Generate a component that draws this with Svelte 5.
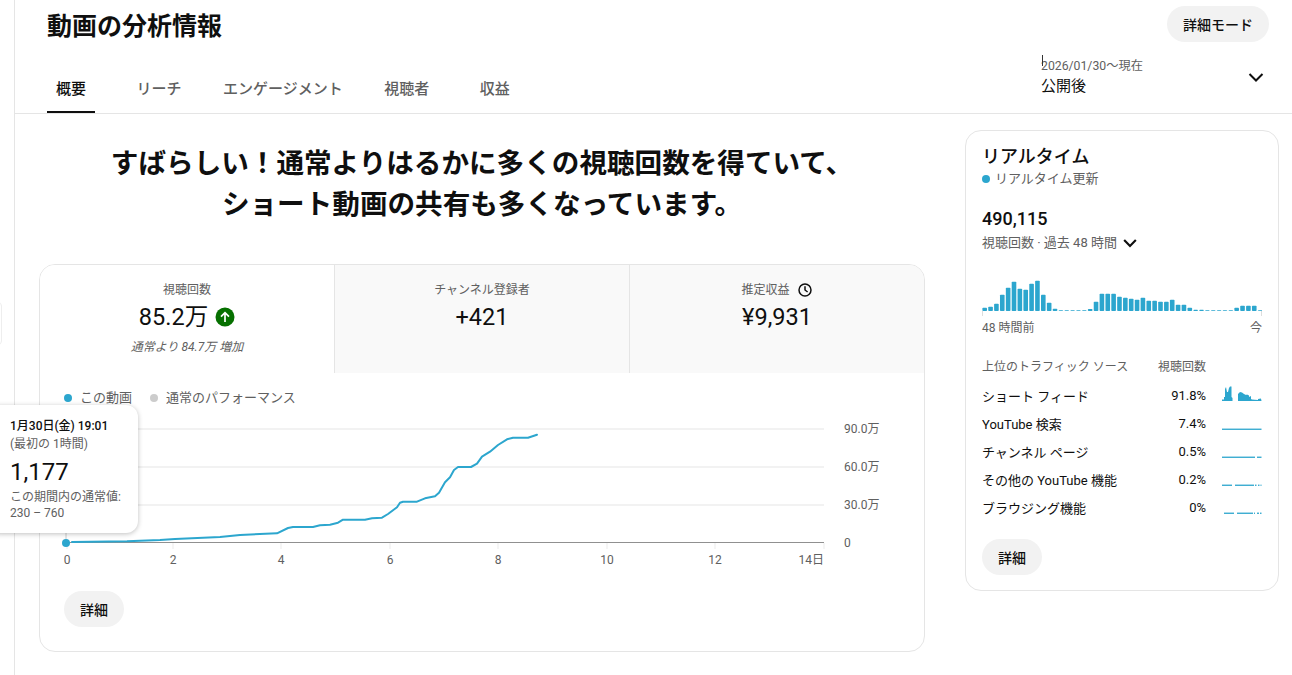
<script>
  const tabs = ['概要', 'リーチ', 'エンゲージメント', '視聴者', '収益'];

  const line = [
    [72,542],[127,541.3],[160,540],[175,539],[220,537],[240,535],[277,533.3],[288,528],[293,527],
    [313,527],[320,525.3],[330,524.7],[338,522.7],[343,519.7],[365,519.7],[372,518.3],[382,517.7],
    [388,514],[397,507.3],[400,502.7],[403,501.7],[417,501.7],[425,498.3],[435,496.3],[439,492.7],
    [445,482.3],[450,477.3],[454,470],[458,467],[471,467],[477,463.7],[482,456.7],[490,451.7],
    [498,445],[507,439.3],[513,437.7],[528,437.7],[537,434.7]
  ].map((p) => p.join(',')).join(' ');

  const grid = [[429, '90.0万'], [467, '60.0万'], [505, '30.0万'], [542.5, '0']];
  const xTicks = [[67, '0'], [173, '2'], [281, '4'], [390, '6'], [498, '8'], [607, '10'], [715, '12'], [824, '14日']];

  // bar heights of the 48 hour chart, in px
  const bars = [3.3,4.3,7.3,16.3,23.3,29.3,22.3,21.3,27.3,30.3,16.3,8.3,2.3,.8,.8,.8,.8,.8,2,9.3,17.3,17.3,17.3,14.3,13.3,12.3,11.3,13.3,10.3,10.3,9.3,9.3,11.3,6.3,6.3,3.3,1.3,1.3,.8,.8,.8,.8,.8,3.3,5.3,5.3,5.3,.8];

  const sources = [
    { name: 'ショート フィード', pct: '91.8%', segs: null },
    { name: 'YouTube 検索', pct: '7.4%', segs: [[0, 39.5]] },
    { name: 'チャンネル ページ', pct: '0.5%', segs: [[0, 33], [35, 39.5]] },
    { name: 'その他の YouTube 機能', pct: '0.2%', segs: [[0, 10], [13, 32], [33, 34.5], [36, 37.5], [38.5, 39.5]] },
    { name: 'ブラウジング機能', pct: '0%', segs: [[2, 12], [15, 31], [32, 33], [35, 37], [38, 39.5]] }
  ];

  const spark = '0,15 0,13.5 2,13.5 2,11 3,11 3,3 4,1 5,6 6,6 7,2 8,.5 9.5,.5 9.5,11 10.5,12 10.5,15 16,15 16,8 18,6 20,6.5 22,8 24,9 25,8.5 27,9.5 27,11 29,10 29,13 30,13.5 36,14 36,13 39,12.5 39.5,15';
</script>

<div class="page">
  <div class="edge"></div>
  <main>
    <header>
      <div class="top">
        <h1>動画の分析情報</h1>
        <button class="pill wide">詳細モード</button>
      </div>
      <div class="nav">
        <div class="tabs">
          {#each tabs as tab, i}
            <div class="tab" class:active={i === 0}>{tab}</div>
          {/each}
        </div>
        <div class="period">
          <span class="caret"></span>
          <div>
            <div class="range">2026/01/30〜現在</div>
            <div class="label">公開後</div>
          </div>
          <svg class="chev" width="24" height="24" viewBox="0 0 24 24"><path d="M5.5 9l6.5 6.5L18.5 9" fill="none" stroke="#0f0f0f" stroke-width="2"/></svg>
        </div>
      </div>
    </header>

    <div class="content">
      <section class="left">
        <h2>すばらしい！通常よりはるかに多くの視聴回数を得ていて、<br />ショート動画の共有も多くなっています。</h2>
        <div class="card stats">
          <div class="cells">
            <div class="cell on">
              <div class="name">視聴回数</div>
              <div class="value">85.2万
                <svg width="20" height="20" viewBox="0 0 20 20"><circle cx="10" cy="10" r="9.5" fill="#067000"/><path d="M10 15V6M6 9.6L10 5.6l4 4" fill="none" stroke="#fff" stroke-width="1.7"/></svg>
              </div>
              <div class="note">通常より 84.7万 増加</div>
            </div>
            <div class="cell">
              <div class="name">チャンネル登録者</div>
              <div class="value">+421</div>
            </div>
            <div class="cell">
              <div class="name">推定収益
                <svg width="16" height="16" viewBox="0 0 16 16"><circle cx="8" cy="8" r="6" fill="none" stroke="#0f0f0f" stroke-width="1.5"/><path d="M8 4.2V8l2.6 2" fill="none" stroke="#0f0f0f" stroke-width="1.5"/></svg>
              </div>
              <div class="value">¥9,931</div>
            </div>
          </div>

          <div class="legend">
            <span class="item"><i class="dot blue"></i>この動画</span>
            <span class="item"><i class="dot grey"></i>通常のパフォーマンス</span>
          </div>

          <svg class="plot" width="884" height="150" viewBox="40 420 884 150">
            {#each grid as [y, label], i}
              <line x1="67" x2="824" y1={y} y2={y} class={i === 3 ? 'base' : 'rule'} />
              <text x="844" y={Math.round(y) + 3.5} class="tick">{label}</text>
            {/each}
            {#each xTicks as [x, label]}
              <line x1={x} x2={x} y1="543" y2="549" class="rule thin" />
              <text x={x} y="564" class="tick" text-anchor={label === '14日' ? 'end' : 'middle'}>{label}</text>
            {/each}
            <line x1="66" x2="66" y1="533" y2="543" stroke="#ccc" />
            <polyline points={line} class="curve" />
            <circle cx="66" cy="543" r="4" fill="#2ca6ce" />
          </svg>

          <button class="pill more">詳細</button>
        </div>
      </section>

      <aside class="card live">
        <div class="live-title">リアルタイム</div>
        <div class="update"><i class="dot blue"></i>リアルタイム更新</div>
        <div class="count">490,115</div>
        <div class="views">視聴回数 · 過去 48 時間
          <svg width="20" height="20" viewBox="0 0 24 24"><path d="M5 8.5l7 7 7-7" fill="none" stroke="#0f0f0f" stroke-width="2.6"/></svg>
        </div>
        <svg class="hours" width="280" height="46" viewBox="0 0 280 46">
          {#each bars as h, i}
            <rect x={i * 5.86 + .4} y={35 - h} width="4.6" height={h} rx=".8" fill="#2ca6ce" />
          {/each}
          <path d="M.5 35v5M279.5 35v5" stroke="#ddd" />
        </svg>
        <div class="ends"><span>48 時間前</span><span>今</span></div>

        <div class="row head"><span>上位のトラフィック ソース</span><span>視聴回数</span><span></span></div>
        {#each sources as s}
          <div class="row">
            <span>{s.name}</span>
            <span class="pct">{s.pct}</span>
            <svg width="40" height="18" viewBox="0 0 40 18">
              {#if s.segs}
                {#each s.segs as [a, b]}
                  <rect x={a} y="14.6" width={b - a} height="1.3" fill="#2ca6ce" />
                {/each}
              {:else}
                <polygon points={spark} fill="#2ca6ce" />
              {/if}
            </svg>
          </div>
        {/each}
        <button class="pill more2">詳細</button>
      </aside>
    </div>
  </main>

  <div class="tooltip">
    <div class="when">1月30日(金) 19:01</div>
    <div class="sub">(最初の 1時間)</div>
    <div class="big">1,177</div>
    <div class="sub">この期間内の通常値:<br />230 – 760</div>
  </div>
</div>

<style>
  :global(body) {
    margin: 0;
    background: #fff;
  }
  .page {
    position: relative;
    height: 675px;
    overflow: hidden;
    padding-left: 14px;
    font-family: Roboto, "Noto Sans CJK JP", sans-serif;
    color: #0f0f0f;
  }
  .edge {
    position: absolute;
    left: -6px;
    top: 302px;
    width: 6px;
    height: 41px;
    border: 1px solid #eee;
    border-radius: 4px;
  }
  main {
    border-left: 1px solid #e5e5e5;
    height: 675px;
  }
  header {
    border-bottom: 1px solid #e5e5e5;
  }
  .top {
    display: flex;
    justify-content: space-between;
    padding: 6px 23px 0 32px;
    height: 59px;
    box-sizing: border-box;
  }
  h1 {
    margin: 0;
    font-size: 25px;
    line-height: 42px;
    font-weight: 700;
  }
  .pill {
    border: 0;
    background: #f2f2f2;
    height: 36px;
    border-radius: 18px;
    font: 500 14px Roboto, "Noto Sans CJK JP", sans-serif;
    color: #0f0f0f;
    padding: 0;
  }
  .wide {
    width: 102px;
  }
  .nav {
    display: flex;
    justify-content: space-between;
    padding: 0 24px 0 32px;
    height: 54px;
  }
  .tabs {
    display: flex;
    gap: 40px;
    align-items: flex-end;
  }
  .tab {
    min-width: 48px;
    height: 52px;
    line-height: 60px;
    text-align: center;
    font-size: 15px;
    font-weight: 500;
    color: #606060;
    border-bottom: 2px solid transparent;
  }
  .tab.active {
    color: #0f0f0f;
    border-bottom-color: #0f0f0f;
  }
  .period {
    position: relative;
    width: 227px;
    display: flex;
    justify-content: space-between;
  }
  .caret {
    position: absolute;
    left: 1px;
    top: -4px;
    width: 1px;
    height: 11px;
    background: #333;
  }
  .range {
    font-size: 12.25px;
    line-height: 14px;
    color: #606060;
  }
  .label {
    font-size: 15px;
    line-height: 22px;
    margin-top: 2px;
  }
  .chev {
    margin-top: 6px;
  }
  .content {
    display: flex;
    gap: 40px;
    padding: 16px 13px 0 24px;
  }
  .left {
    width: 886px;
  }
  h2 {
    margin: 0;
    height: 134px;
    padding-top: 13px;
    box-sizing: border-box;
    text-align: center;
    font-size: 27.6px;
    line-height: 41px;
    font-weight: 700;
  }
  .card {
    border: 1px solid #e5e5e5;
    border-radius: 16px;
    box-sizing: border-box;
  }
  .stats {
    height: 388px;
    overflow: hidden;
  }
  .cells {
    display: grid;
    grid-template-columns: 294px 295px 1fr;
    height: 108px;
  }
  .cell {
    background: #f9f9f9;
    border-left: 1px solid #e5e5e5;
    text-align: center;
    padding-top: 16px;
    box-sizing: border-box;
  }
  .cell.on {
    background: #fff;
    border-left: 0;
  }
  .name {
    font-size: 12px;
    line-height: 18px;
    color: #606060;
    display: flex;
    justify-content: center;
    align-items: center;
    gap: 7px;
  }
  .value {
    font-size: 23.5px;
    line-height: 36px;
    display: flex;
    justify-content: center;
    align-items: center;
    gap: 7px;
  }
  .note {
    font-size: 12px;
    line-height: 18px;
    margin-top: 3px;
    font-style: italic;
    color: #606060;
  }
  .legend {
    display: flex;
    gap: 18px;
    height: 47px;
    padding: 15px 0 0 24px;
    box-sizing: border-box;
    font-size: 13px;
    line-height: 20px;
    color: #606060;
  }
  .item {
    display: flex;
    align-items: center;
    gap: 8px;
    height: 20px;
  }
  .dot {
    display: block;
    width: 8px;
    height: 8px;
    border-radius: 50%;
  }
  .blue {
    background: #2ca6ce;
  }
  .grey {
    background: #ccc;
  }
  .plot {
    display: block;
  }
  .rule {
    stroke: #f2f2f2;
    stroke-width: 2;
  }
  .rule.thin {
    stroke-width: 1.5;
  }
  .base {
    stroke: #909090;
    stroke-width: 1;
  }
  .tick {
    font-size: 12px;
    fill: #606060;
  }
  .curve {
    fill: none;
    stroke: #2ca6ce;
    stroke-width: 2;
    stroke-linejoin: round;
    stroke-linecap: round;
  }
  .more {
    display: block;
    width: 60px;
    margin: 21px 0 0 24px;
  }
  .live {
    width: 314px;
    height: 461px;
    padding: 16px;
  }
  .live-title {
    font-size: 18px;
    line-height: 20px;
    font-weight: 500;
  }
  .update {
    display: flex;
    align-items: center;
    gap: 5px;
    font-size: 13px;
    line-height: 19px;
    margin-top: 2px;
    color: #606060;
  }
  .count {
    font-size: 18px;
    font-weight: 500;
    line-height: 22px;
    margin-top: 20px;
  }
  .views {
    display: flex;
    align-items: center;
    gap: 3px;
    font-size: 13px;
    line-height: 20px;
    margin-top: 3px;
    color: #606060;
  }
  .hours {
    display: block;
    margin-top: 23px;
  }
  .ends {
    display: flex;
    justify-content: space-between;
    font-size: 12px;
    line-height: 18px;
    margin-top: -3px;
    color: #606060;
  }
  .row {
    display: grid;
    grid-template-columns: 1fr auto 40px;
    column-gap: 16px;
    align-items: center;
    height: 28px;
    font-size: 13px;
  }
  .row svg {
    display: block;
  }
  .head {
    margin-top: 13px;
    height: 31px;
    font-size: 12px;
    color: #606060;
  }
  .pct {
    text-align: right;
  }
  .more2 {
    display: block;
    width: 60px;
    margin-top: 18px;
  }
  .tooltip {
    position: absolute;
    left: -12px;
    top: 405px;
    width: 150px;
    height: 128px;
    box-sizing: border-box;
    padding: 12px 0 0 22px;
    background: #fff;
    border-radius: 12px;
    box-shadow: 0 1px 5px rgba(0, 0, 0, .25);
  }
  .when {
    font-size: 12px;
    line-height: 19px;
    font-weight: 500;
  }
  .sub {
    font-size: 12px;
    line-height: 16px;
    color: #606060;
  }
  .big {
    font-size: 24px;
    line-height: 28px;
    margin: 6px 0 3px;
  }
</style>
